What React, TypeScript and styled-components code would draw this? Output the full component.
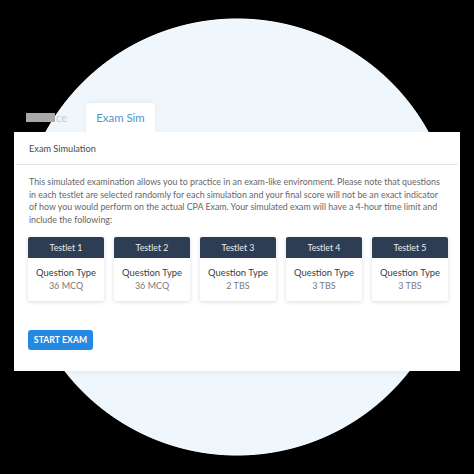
import styled, { createGlobalStyle } from "styled-components";

const GlobalStyle = createGlobalStyle`
  * { box-sizing: border-box; }
  html, body { margin: 0; padding: 0; background: #000; }
  body { font-family: Lato, "Open Sans", sans-serif; }
`;

const Stage = styled.div`
  width: 474px;
  height: 474px;
  background: radial-gradient(circle 219px at 237px 237px, #f0f7fc 99.6%, #000 100%);
  padding: 103px 14px 0 14px;
  overflow: hidden;
`;

const Tabs = styled.div`
  display: flex;
  align-items: flex-end;
  height: 29px;
  padding-left: 12px;
  gap: 19px;
`;

const Tab = styled.div<{ active?: boolean }>`
  height: 29px;
  display: flex;
  align-items: center;
  padding: 0 ${(p) => (p.active ? "10px" : "0")};
  font-size: 11.4px;
  color: ${(p) => (p.active ? "#4f93cf" : "#c4ccd4")};
  background: ${(p) => (p.active ? "#fff" : "transparent")};
  border-radius: 4px 4px 0 0;
  box-shadow: ${(p) => (p.active ? "0 -1px 4px rgba(0,0,0,0.06)" : "none")};
`;

const Redact = styled.span`
  background: #a9a9a9;
  color: transparent;
  display: inline-block;
  height: 9px;
  line-height: 9px;
  margin-right: 1px;
`;

const Card = styled.div`
  background: #fff;
  width: 446px;
  height: 239px;
  box-shadow: 0 2px 6px rgba(0, 0, 0, 0.05);
`;

const CardHeader = styled.div`
  height: 33px;
  margin: 0 2px;
  padding-left: 13px;
  display: flex;
  align-items: center;
  font-size: 9.2px;
  color: #4a4a4a;
  border-bottom: 1px solid #e4e4e4;
`;

const CardBody = styled.div`
  padding: 11px 14px 0 15px;
`;

const Intro = styled.p`
  margin: 0;
  font-size: 8.85px;
  line-height: 12.5px;
  color: #676767;
`;

const Testlets = styled.div`
  display: grid;
  grid-template-columns: repeat(5, 76px);
  gap: 10px;
  margin-top: 11px;
  margin-left: -1px;
`;

const Testlet = styled.div`
  background: #fff;
  box-shadow: 0 1px 4px rgba(0, 0, 0, 0.14);
  border-radius: 2px;
  overflow: hidden;
`;

const TestletHead = styled.div`
  height: 21px;
  background: #2d3e54;
  color: #e8edf2;
  font-size: 8.8px;
  display: flex;
  align-items: center;
  justify-content: center;
`;

const TestletBody = styled.div`
  height: 43px;
  display: flex;
  flex-direction: column;
  align-items: center;
  justify-content: center;
  gap: 2px;
  padding-bottom: 2px;
`;

const QType = styled.div`
  font-size: 9.4px;
  color: #3c3c3c;
`;

const QCount = styled.div`
  font-size: 9px;
  color: #7a7a7a;
`;

const StartButton = styled.button`
  margin-top: 29px;
  margin-left: -1px;
  height: 20px;
  width: 65px;
  padding: 0;
  border: none;
  border-radius: 3px;
  background: #2389e2;
  color: #fff;
  font-family: inherit;
  font-size: 8.6px;
  font-weight: 700;
  letter-spacing: 0.1px;
`;

const testlets = [
  { name: "Testlet 1", count: "36 MCQ" },
  { name: "Testlet 2", count: "36 MCQ" },
  { name: "Testlet 3", count: "2 TBS" },
  { name: "Testlet 4", count: "3 TBS" },
  { name: "Testlet 5", count: "3 TBS" },
];

export default function App() {
  return (
    <>
      <GlobalStyle />
      <Stage>
        <Tabs>
          <Tab>
            <span>
              <Redact>Practi</Redact>ce
            </span>
          </Tab>
          <Tab active>Exam Sim</Tab>
        </Tabs>
        <Card>
          <CardHeader>Exam Simulation</CardHeader>
          <CardBody>
            <Intro>
              This simulated examination allows you to practice in an exam-like
              environment. Please note that questions in each testlet are
              selected randomly for each simulation and your final score will
              not be an exact indicator of how you would perform on the actual
              CPA Exam. Your simulated exam will have a 4-hour time limit and
              include the following:
            </Intro>
            <Testlets>
              {testlets.map((t) => (
                <Testlet key={t.name}>
                  <TestletHead>{t.name}</TestletHead>
                  <TestletBody>
                    <QType>Question Type</QType>
                    <QCount>{t.count}</QCount>
                  </TestletBody>
                </Testlet>
              ))}
            </Testlets>
            <StartButton>START EXAM</StartButton>
          </CardBody>
        </Card>
      </Stage>
    </>
  );
}
